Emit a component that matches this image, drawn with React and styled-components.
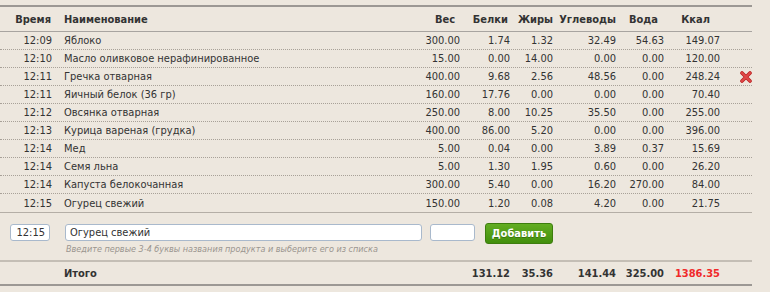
import React from 'react';
import styled, { createGlobalStyle } from 'styled-components';

const GlobalStyle = createGlobalStyle`
  html, body {
    margin: 0;
    background: #ede7de;
  }
  body {
    font-family: "DejaVu Sans Condensed", "DejaVu Sans", Verdana, sans-serif;
    font-size: 11px;
    color: #333;
  }
`;

const COLS = '56px 344px 64px 50px 43px 63px 48px 56px 28px';

const Diary = styled.div`
  width: 752px;
  padding-top: 5px;
`;

const Row = styled.div`
  display: grid;
  grid-template-columns: ${COLS};
  align-items: center;
  height: 18px;
  border-bottom: ${p => p.$border || '1px dotted #a8a198'};
  box-sizing: border-box;
`;

const HeadRow = styled(Row)`
  border-top: 2px solid #9c9894;
  border-bottom: 1px solid #a8a4a0;
  font-weight: bold;
  height: 27px;
`;

const Cell = styled.div`
  text-align: ${p => p.$left ? 'left' : 'right'};
  padding-left: ${p => p.$left ? 8 : 0}px;
  padding-right: ${p => p.$pr ?? 4}px;
  white-space: nowrap;
  overflow: hidden;
  color: ${p => p.$red ? '#f02a2a' : 'inherit'};
`;

const Remove = styled.button`
  border: 0;
  background: none;
  padding: 0 0 0 16px;
  display: flex;
  align-items: center;
  cursor: pointer;
`;

const AddForm = styled.div`
  display: flex;
  align-items: flex-start;
  padding: 11px 0 4px 10px;
  height: 50px;
  box-sizing: border-box;
  border-top: 1px solid #b4aea6;
  border-bottom: 2px solid #c4beb5;
`;

const Input = styled.input`
  width: ${p => p.$w}px;
  height: 17px;
  box-sizing: border-box;
  border: 1px solid #a9b9cc;
  border-radius: 3px;
  background: #fff;
  font-family: inherit;
  font-size: 11px;
  color: #333;
  padding: 0 4px;
  text-align: ${p => p.$right ? 'right' : 'left'};
  margin-right: ${p => p.$mr || 0}px;
  outline: none;
`;

const NameField = styled.div`
  display: flex;
  flex-direction: column;
  margin-right: 8px;
`;

const Hint = styled.span`
  margin-top: 3px;
  margin-left: 1px;
  font-size: 9px;
  font-style: italic;
  color: #9a958f;
`;

const AddButton = styled.button`
  margin-top: -1px;
  width: 68px;
  height: 21px;
  border: 1px solid #3d7d0e;
  border-radius: 3px;
  background: linear-gradient(#63ad22, #428f0c);
  color: #fff;
  font-family: inherit;
  font-size: 11px;
  font-weight: bold;
  text-shadow: 0 1px 0 rgba(0, 0, 0, 0.25);
  cursor: pointer;
  padding: 0;
`;

const TotalRow = styled(Row)`
  font-weight: bold;
  height: 24px;
  border-bottom: 2px solid #9c9894;
`;

const CrossIcon = () => (
  <svg width="12" height="12" viewBox="0 0 12 12">
    <path d="M2 2 L10 10 M10 2 L2 10" stroke="#b81e1e" strokeWidth="3.6" strokeLinecap="round" />
    <path d="M2 2 L10 10 M10 2 L2 10" stroke="#e04848" strokeWidth="2.2" strokeLinecap="round" />
  </svg>
);

const entries = [
  ['12:09', 'Яблоко', '300.00', '1.74', '1.32', '32.49', '54.63', '149.07'],
  ['12:10', 'Масло оливковое нерафинированное', '15.00', '0.00', '14.00', '0.00', '0.00', '120.00'],
  ['12:11', 'Гречка отварная', '400.00', '9.68', '2.56', '48.56', '0.00', '248.24', true],
  ['12:11', 'Яичный белок (36 гр)', '160.00', '17.76', '0.00', '0.00', '0.00', '70.40'],
  ['12:12', 'Овсянка отварная', '250.00', '8.00', '10.25', '35.50', '0.00', '255.00'],
  ['12:13', 'Курица вареная (грудка)', '400.00', '86.00', '5.20', '0.00', '0.00', '396.00'],
  ['12:14', 'Мед', '5.00', '0.04', '0.00', '3.89', '0.37', '15.69'],
  ['12:14', 'Семя льна', '5.00', '1.30', '1.95', '0.60', '0.00', '26.20'],
  ['12:14', 'Капуста белокочанная', '300.00', '5.40', '0.00', '16.20', '270.00', '84.00'],
  ['12:15', 'Огурец свежий', '150.00', '1.20', '0.08', '4.20', '0.00', '21.75'],
];

export default function App() {
  return (
    <>
      <GlobalStyle />
      <Diary>
        <HeadRow>
          <Cell $pr={5}>Время</Cell>
          <Cell $left>Наименование</Cell>
          <Cell $pr={9}>Вес</Cell>
          <Cell $pr={6}>Белки</Cell>
          <Cell>Жиры</Cell>
          <Cell>Углеводы</Cell>
          <Cell $pr={10}>Вода</Cell>
          <Cell $pr={14}>Ккал</Cell>
          <div />
        </HeadRow>
        {entries.map(([time, name, w, p, f, c, water, kcal, active], i) => (
          <Row key={i} $border={i === entries.length - 1 ? 'none' : undefined}>
            <Cell>{time}</Cell>
            <Cell $left>{name}</Cell>
            <Cell>{w}</Cell>
            <Cell>{p}</Cell>
            <Cell>{f}</Cell>
            <Cell>{c}</Cell>
            <Cell>{water}</Cell>
            <Cell>{kcal}</Cell>
            <div>{active && <Remove><CrossIcon /></Remove>}</div>
          </Row>
        ))}
        <AddForm>
          <Input $w={40} $right $mr={15} defaultValue="12:15" />
          <NameField>
            <Input $w={357} defaultValue="Огурец свежий" />
            <Hint>Введите первые 3-4 буквы названия продукта и выберите его из списка</Hint>
          </NameField>
          <Input $w={45} $mr={10} />
          <AddButton>Добавить</AddButton>
        </AddForm>
        <TotalRow>
          <div />
          <Cell $left>Итого</Cell>
          <div />
          <Cell>131.12</Cell>
          <Cell>35.36</Cell>
          <Cell>141.44</Cell>
          <Cell>325.00</Cell>
          <Cell $red>1386.35</Cell>
          <div />
        </TotalRow>
      </Diary>
    </>
  );
}
